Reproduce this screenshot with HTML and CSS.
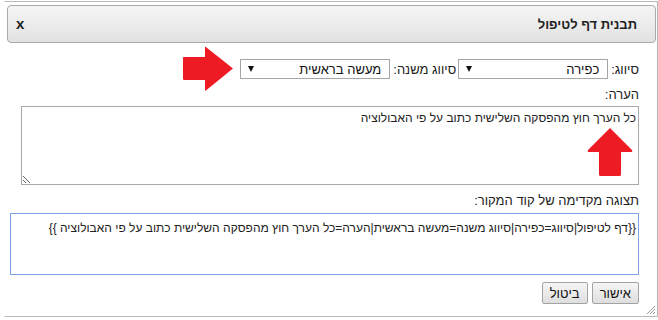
FILE: index.html
```html
<!DOCTYPE html>
<html lang="he" dir="rtl">
<head>
<meta charset="utf-8">
<link rel="stylesheet" href="styles.css">
</head>
<body>
<div class="dialog">
  <div class="titlebar">
    <span class="title">תבנית דף לטיפול</span>
    <span class="close">x</span>
  </div>
  <div class="content">
    <div class="row">
      <span class="label">סיווג:</span>
      <div class="select"><span class="val">כפירה</span><span class="tri"></span></div>
      <span class="label lbl2">סיווג משנה:</span>
      <div class="select"><span class="val">מעשה בראשית</span><span class="tri"></span></div>
      <div class="arrow-right">
        <svg width="52" height="46" viewBox="0 0 52 46"><path d="M1 12.5 Q0 11 2 11 L23 11 L23 1.5 Q23 0 24.5 1.5 L51 22.5 L24.5 44 Q23 45.5 23 44 L23 34 L2 34 Q1 34 1 32.5 Z" fill="#ed1c24"/></svg>
      </div>
    </div>
    <div class="label note-label">הערה:</div>
    <div class="ta-wrap">
      <textarea class="note" readonly>כל הערך חוץ מהפסקה השלישית כתוב על פי האבולוציה</textarea>
      <div class="arrow-up">
        <svg width="46" height="48" viewBox="0 0 46 48"><path d="M23 0 L45 22 Q46 24 44 24 L34 24 L34 46.5 Q34 48 32.5 48 L13.5 48 Q12 48 12 46.5 L12 24 L2 24 Q0 24 1 22 Z" fill="#ed1c24"/></svg>
      </div>
    </div>
    <div class="label preview-label">תצוגה מקדימה של קוד המקור:</div>
    <div class="preview">{{דף לטיפול|סיווג=כפירה|סיווג משנה=מעשה בראשית|הערה=כל הערך חוץ מהפסקה השלישית כתוב על פי האבולוציה }}</div>
    <div class="buttons">
      <button class="btn">אישור</button>
      <button class="btn">ביטול</button>
    </div>
  </div>
  <svg class="grip" width="10" height="10" viewBox="0 0 10 10"><path d="M9 1 L1 9 M9 4 L4 9 M9 7 L7 9" stroke="#999" stroke-width="1"/></svg>
</div>
</body>
</html>
```
FILE: styles.css
```css
html, body {
  margin: 0;
  padding: 0;
  background: #fff;
}
body {
  font-family: "Liberation Sans", Arial, "DejaVu Sans", sans-serif;
  font-size: 13px;
  color: #222;
}
.dialog {
  position: relative;
  box-sizing: border-box;
  margin-top: 1px;
  width: 654px;
  height: 316px;
  border: 1px solid #b9b9b9;
  border-left-color: #fff;
  padding: 3px 1px 0 2px;
  background: #fff;
}
.titlebar {
  box-sizing: border-box;
  height: 38px;
  border: 1px solid #aaa;
  border-radius: 4px;
  background: linear-gradient(#f5f5f5, #e2e2e2);
  display: flex;
  align-items: center;
  justify-content: space-between;
  padding: 0 18px 0 8px;
}
.title {
  font-weight: bold;
  font-size: 13px;
  color: #222;
}
.close {
  font-weight: bold;
  font-size: 15px;
  color: #222;
  line-height: 1;
  padding-bottom: 2px;
}
.content {
  padding: 16px 17px 0 5px;
}
.row {
  display: flex;
  align-items: center;
  height: 20px;
  position: relative;
}
.label {
  color: #222;
}
.row .label {
  margin-left: 3px;
}
.row .lbl2 {
  margin-right: 2px;
}
.select {
  box-sizing: border-box;
  width: 150px;
  height: 20px;
  border: 1px solid #a6a6a6;
  background: #fff;
  display: flex;
  align-items: center;
  justify-content: space-between;
  padding: 0 8px 0 7px;
}
.val {
  color: #111;
}
.tri {
  width: 0;
  height: 0;
  border-left: 3.5px solid transparent;
  border-right: 3.5px solid transparent;
  border-top: 6px solid #111;
}
.arrow-right {
  position: absolute;
  left: 170px;
  top: -13px;
  line-height: 0;
}
.note-label {
  margin-top: 8px;
  height: 15px;
  line-height: 15px;
}
.ta-wrap {
  position: relative;
  margin-top: 4px;
  margin-left: 0;
  padding-left: 11px;
}
.note {
  display: block;
  box-sizing: border-box;
  width: 618px;
  height: 79px;
  margin: 0;
  border: 1px solid #a9a9a9;
  padding: 4px 2px;
  font-family: inherit;
  font-size: 12px;
  color: #222;
  resize: both;
  direction: rtl;
  outline: none;
}
.arrow-up {
  position: absolute;
  left: 575px;
  top: 22px;
  line-height: 0;
}
.preview-label {
  margin-top: 8px;
  height: 15px;
  line-height: 15px;
}
.preview {
  box-sizing: border-box;
  margin-top: 5px;
  width: 629px;
  height: 62px;
  border: 1px solid #7ea3e6;
  padding: 7px 2px;
  font-size: 12px;
  color: #222;
  line-height: 15px;
}
.buttons {
  display: flex;
  gap: 4px;
  margin-top: 7px;
}
.btn {
  box-sizing: border-box;
  height: 22px;
  padding: 0 7px;
  border: 1px solid #a3a3a3;
  border-radius: 2px;
  background: linear-gradient(#f6f6f6, #dedede);
  font-family: inherit;
  font-size: 13px;
  color: #111;
}
.grip {
  position: absolute;
  right: 1px;
  bottom: 1px;
}
```
